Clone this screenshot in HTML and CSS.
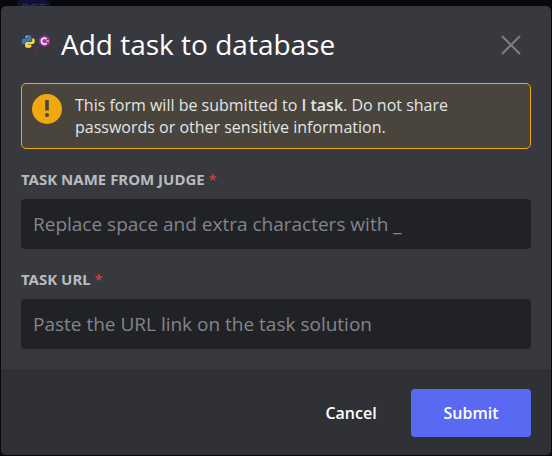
FILE: index.html
```html
<!DOCTYPE html>
<html lang="en">
<head>
<meta charset="utf-8">
<title>Add task to database</title>
<link rel="stylesheet" href="styles.css">
</head>
<body>
<span class="bot-tag" aria-hidden="true">BOT</span>
<form class="modal">
  <header class="header">
    <svg class="avatar" viewBox="0 0 32 32" aria-hidden="true">
      <g transform="translate(-3 1)">
        <path fill="#3f78ab" d="M7 7.200c0-1.600 1-2.200 3-2.200s3.500.8 3.500 2.200v2.600c0 1.200-.8 1.700-2 1.700H8.600c-1.300 0-1.900.9-1.900 2.400H5.200C3.800 13.900 3.600 12.700 3.600 11.200s.8-2.600 2.200-2.600H10.500V8H7z"/>
        <path fill="#f6d443" d="M14.200 8.500h1.200c1.300 0 1.400 1.200 1.400 2.700s-.7 2.700-2.100 2.700H10v.6h3.500v1.300c0 1.500-1.200 2.200-3.200 2.200s-3.300-.8-3.300-2.200v-2c0-1.200.8-1.900 2-1.900h3.400c1.200 0 1.800-.8 1.800-2z"/>
        <circle cx="8.600" cy="6.700" r=".6" fill="#dce8f2"/>
      </g>
      <path fill="#9c2f9c" d="M23.500 6.500l4.800 2.800v5.600l-4.800 2.800-4.800-2.800V9.300z" stroke="#9c2f9c" stroke-linejoin="round"/>
      <path fill="none" stroke="#f3dff3" stroke-width="1.900" d="M25.600 10a3 3 0 1 0 0 4.200"/>
      <path fill="none" stroke="#f3dff3" stroke-width="1" d="M25 12h3"/>
      <path fill="none" stroke="#32466b" stroke-width="1" d="M15.500 17v2l-1 1.500"/>
      <path fill="none" stroke="#722b38" stroke-width="1" d="M15 20v1.500M12 23.500h6"/>
    </svg>
    <h1 class="title">Add task to database</h1>
    <button class="close" type="button" aria-label="Close">
      <svg viewBox="0 0 20 20" aria-hidden="true"><path d="M1 1l18 18M19 1L1 19"/></svg>
    </button>
  </header>
  <div class="content">
    <div class="notice">
      <svg class="warning" viewBox="0 0 30 30" aria-hidden="true">
        <circle cx="15" cy="15" r="15" fill="#f0a80f"/>
        <path fill="#49443c" d="M13.200 6h3.600v10.500h-3.600z"/>
        <circle cx="15" cy="21" r="2" fill="#49443c"/>
      </svg>
      <p class="notice-text">This form will be submitted to <strong>I task</strong>. Do not share passwords or other sensitive information.</p>
    </div>
    <div class="field">
      <label class="label" for="task-name">Task name from judge <span class="required">*</span></label>
      <input class="input" id="task-name" type="text" placeholder="Replace space and extra characters with _">
    </div>
    <div class="field">
      <label class="label" for="task-url">Task URL <span class="required">*</span></label>
      <input class="input" id="task-url" type="text" placeholder="Paste the URL link on the task solution">
    </div>
  </div>
  <footer class="footer">
    <button class="button cancel" type="button">Cancel</button>
    <button class="button submit" type="submit">Submit</button>
  </footer>
</form>
</body>
</html>
```
FILE: styles.css
```css
* {
  box-sizing: border-box;
}

body {
  margin: 0;
  padding: 6px 1px 1px;
  background: #08090c;
  font-family: "Open Sans", "Noto Sans", sans-serif;
}

.bot-tag {
  position: absolute;
  top: 0;
  left: 17px;
  width: 33px;
  height: 18px;
  border-radius: 4px;
  background: #111138;
  color: #34344c;
  font-size: 12px;
  line-height: 18px;
  text-align: center;
}

.modal {
  position: relative;
  overflow: hidden;
  border-radius: 5px;
  background: #38393e;
}

.header {
  display: flex;
  align-items: flex-start;
  padding: 19px 20px 18px;
}

.avatar {
  flex: none;
  width: 32px;
  height: 32px;
  margin: 4px 8px 0 0;
}

.title {
  flex: 1;
  margin: 0;
  color: #fff;
  font-size: 28px;
  font-weight: 400;
  line-height: 38px;
}

.close {
  display: flex;
  padding: 10px;
  border: 0;
  background: none;
}

.close svg {
  width: 20px;
  height: 20px;
  fill: none;
  stroke: #7d7e82;
  stroke-width: 2;
}

.content {
  padding: 0 20px 20px;
}

.notice {
  display: flex;
  gap: 13px;
  padding: 10px;
  border: 1px solid #f0a80f;
  border-radius: 5px;
  margin-bottom: 20px;
  background: #49443c;
}

.warning {
  flex: none;
  width: 30px;
  height: 30px;
}

.notice-text {
  max-width: 400px;
  margin: 0;
  color: #e4e5e6;
  font-size: 16px;
  font-weight: 500;
  line-height: 22px;
}

.notice-text strong {
  font-weight: 600;
}

.field + .field {
  margin-top: 20px;
}

.label {
  display: block;
  margin-bottom: 10px;
  color: #b9bbbe;
  font: 700 15px/20px "Noto Sans", "Open Sans", sans-serif;
  text-transform: uppercase;
}

.required {
  color: #d8423f;
  font-weight: 400;
}

.input {
  display: block;
  width: 100%;
  padding: 12px;
  border: 0;
  border-radius: 4px;
  background: #212226;
  color: #dbdcdd;
  font: 400 19px/26px "Open Sans", "Noto Sans", sans-serif;
}

.input::placeholder {
  color: #83858a;
  opacity: 1;
}

.footer {
  display: flex;
  justify-content: flex-end;
  padding: 20px 20px 18px;
  background: #303136;
}

.button {
  min-width: 120px;
  padding: 12px;
  border: 0;
  border-radius: 4px;
  color: #fff;
  font: 600 16px/24px "Open Sans", "Noto Sans", sans-serif;
}

.cancel {
  background: none;
}

.submit {
  background: #5a69f1;
}
```
